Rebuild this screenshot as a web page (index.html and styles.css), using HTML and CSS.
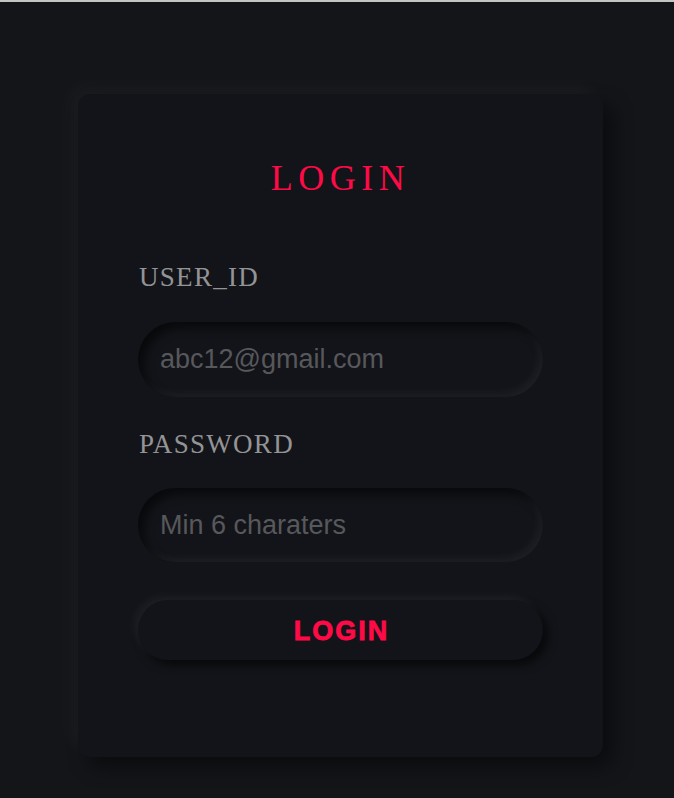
FILE: index.html
```html
<!DOCTYPE html>
<html lang="en">
<head>
<meta charset="utf-8">
<title>Login</title>
<link rel="stylesheet" href="styles.css">
</head>
<body>
<main class="page">
  <form class="card">
    <h1 class="title">LOGIN</h1>
    <label class="label label-user" for="user">USER_ID</label>
    <input class="field field-user" id="user" type="text" placeholder="abc12@gmail.com">
    <label class="label label-pass" for="pass">PASSWORD</label>
    <input class="field field-pass" id="pass" type="password" placeholder="Min 6 charaters">
    <button class="btn" type="button">LOGIN</button>
  </form>
</main>
</body>
</html>
```
FILE: styles.css
```css
html, body {
  margin: 0;
  padding: 0;
}
body {
  background: #141519;
  border-top: 2px solid #c4c4c4;
  min-height: 796px;
  box-sizing: border-box;
}
.page {
  padding: 92px 0 0 78px;
}
.card {
  width: 525px;
  box-sizing: border-box;
  padding: 64px 60px 97px 60px;
  background: #131419;
  border-radius: 12px;
  box-shadow: -8px -8px 18px rgba(255, 255, 255, 0.035), 10px 10px 20px rgba(0, 0, 0, 0.45);
  display: flex;
  flex-direction: column;
}
.title {
  margin: 0;
  font-family: "Liberation Serif", serif;
  font-weight: normal;
  font-size: 36px;
  line-height: 40px;
  letter-spacing: 5.5px;
  text-align: center;
  color: #ff0a47;
}
.label {
  display: block;
  font-family: "Liberation Serif", serif;
  font-size: 27px;
  line-height: 32px;
  color: #949496;
  letter-spacing: 1.3px;
  padding-left: 1px;
}
.label-user { margin-top: 63px; }
.label-pass { margin-top: 31px; }
.field {
  display: block;
  width: 405px;
  box-sizing: border-box;
  border: none;
  outline: none;
  border-radius: 40px;
  background: #131419;
  padding: 0 22px;
  font-family: "Liberation Sans", Arial, sans-serif;
  font-size: 27px;
  color: #bbbbbb;
  box-shadow: inset 6px 6px 10px rgba(0, 0, 0, 0.55), inset -4px -4px 8px rgba(255, 255, 255, 0.05);
}
.field::placeholder {
  color: #57585b;
}
.field-user { margin-top: 29px; height: 75px; }
.field-pass { margin-top: 28px; height: 74px; }
.btn {
  margin-top: 38px;
  width: 405px;
  height: 60px;
  border: none;
  border-radius: 30px;
  background: #131419;
  color: #ff0a47;
  font-family: "Liberation Sans", Arial, sans-serif;
  font-weight: bold;
  font-size: 27px;
  line-height: 56px;
  letter-spacing: 2px;
  -webkit-text-stroke: 0.8px #ff0a47;
  padding: 2px 0 0 2px;
  box-shadow: -4px -4px 8px rgba(255, 255, 255, 0.05), 5px 5px 10px rgba(0, 0, 0, 0.6);
}
```
